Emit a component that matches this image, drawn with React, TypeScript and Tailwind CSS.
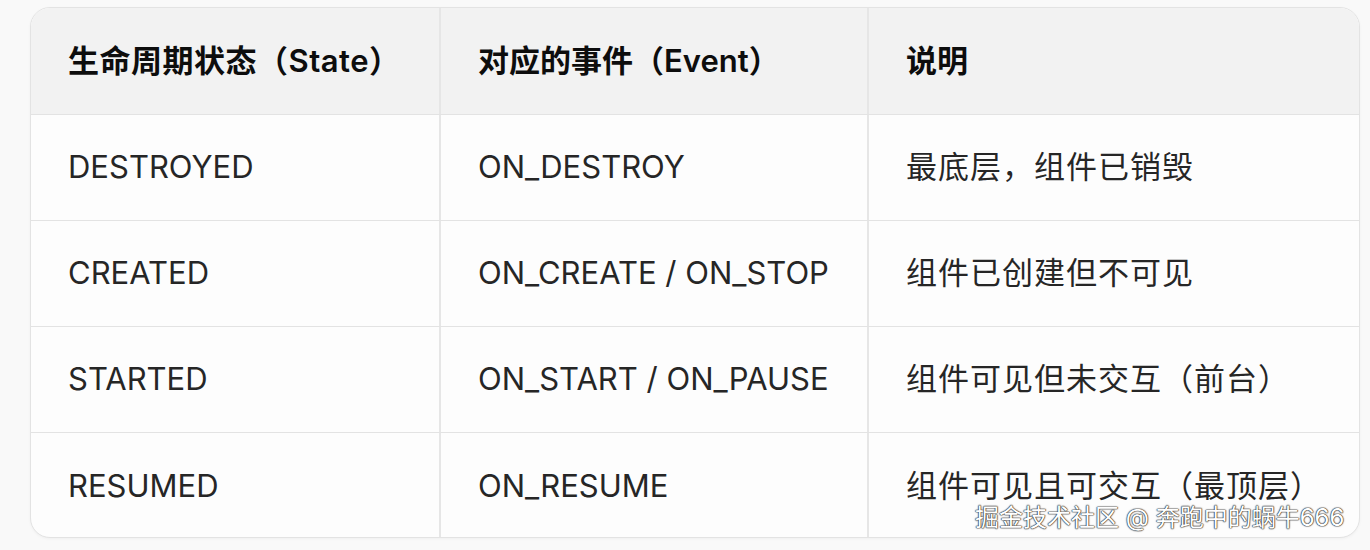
const rows = [
  { state: 'DESTROYED', event: 'ON_DESTROY', desc: '最底层，组件已销毁' },
  { state: 'CREATED', event: 'ON_CREATE / ON_STOP', desc: '组件已创建但不可见' },
  { state: 'STARTED', event: 'ON_START / ON_PAUSE', desc: '组件可见但未交互（前台）' },
  { state: 'RESUMED', event: 'ON_RESUME', desc: '组件可见且可交互（最顶层）' },
];

const font = { fontFamily: 'Inter, "Noto Sans CJK SC", sans-serif' };

export default function App() {
  return (
    <div className="w-[1370px] h-[550px] bg-[#f9f9f9] pt-[7px] pl-[30px] relative" style={font}>
      <div className="w-[1330px] h-[531px] rounded-[20px] border border-[#e3e3e3] bg-[#fdfdfd] overflow-hidden shadow-[0_1px_3px_rgba(0,0,0,0.04)]">
        <div className="grid grid-cols-[410px_428px_1fr] h-[107px] bg-[#f2f2f2] border-b border-[#e3e3e3] text-[31px] font-semibold text-[#0d0d0d]">
          <div className="flex items-center pl-[37px] border-r-2 border-[#e6e6e6] tracking-[0.5px]">生命周期状态（State）</div>
          <div className="flex items-center pl-[37px] border-r-2 border-[#e6e6e6]">对应的事件（Event）</div>
          <div className="flex items-center pl-[37px]">说明</div>
        </div>
        {rows.map((r, i) => (
          <div
            key={r.state}
            className={
              'grid grid-cols-[410px_428px_1fr] h-[106px] text-[31px] text-[#262626] ' +
              (i < rows.length - 1 ? 'border-b border-[#e3e3e3]' : '')
            }
          >
            <div className="flex items-center pl-[37px] border-r-2 border-[#e6e6e6]">{r.state}</div>
            <div className="flex items-center pl-[37px] border-r-2 border-[#e6e6e6]">{r.event}</div>
            <div className="flex items-center pl-[37px] tracking-[1px]">{r.desc}</div>
          </div>
        ))}
      </div>
      <div className="absolute left-[975px] top-[500px] text-[24px] text-white whitespace-nowrap [text-shadow:0_0_1px_#333,0_0_1px_#333,0_0_1px_#333,0_0_2px_#666]">
        掘金技术社区 @ 奔跑中的蜗牛666
      </div>
    </div>
  );
}
